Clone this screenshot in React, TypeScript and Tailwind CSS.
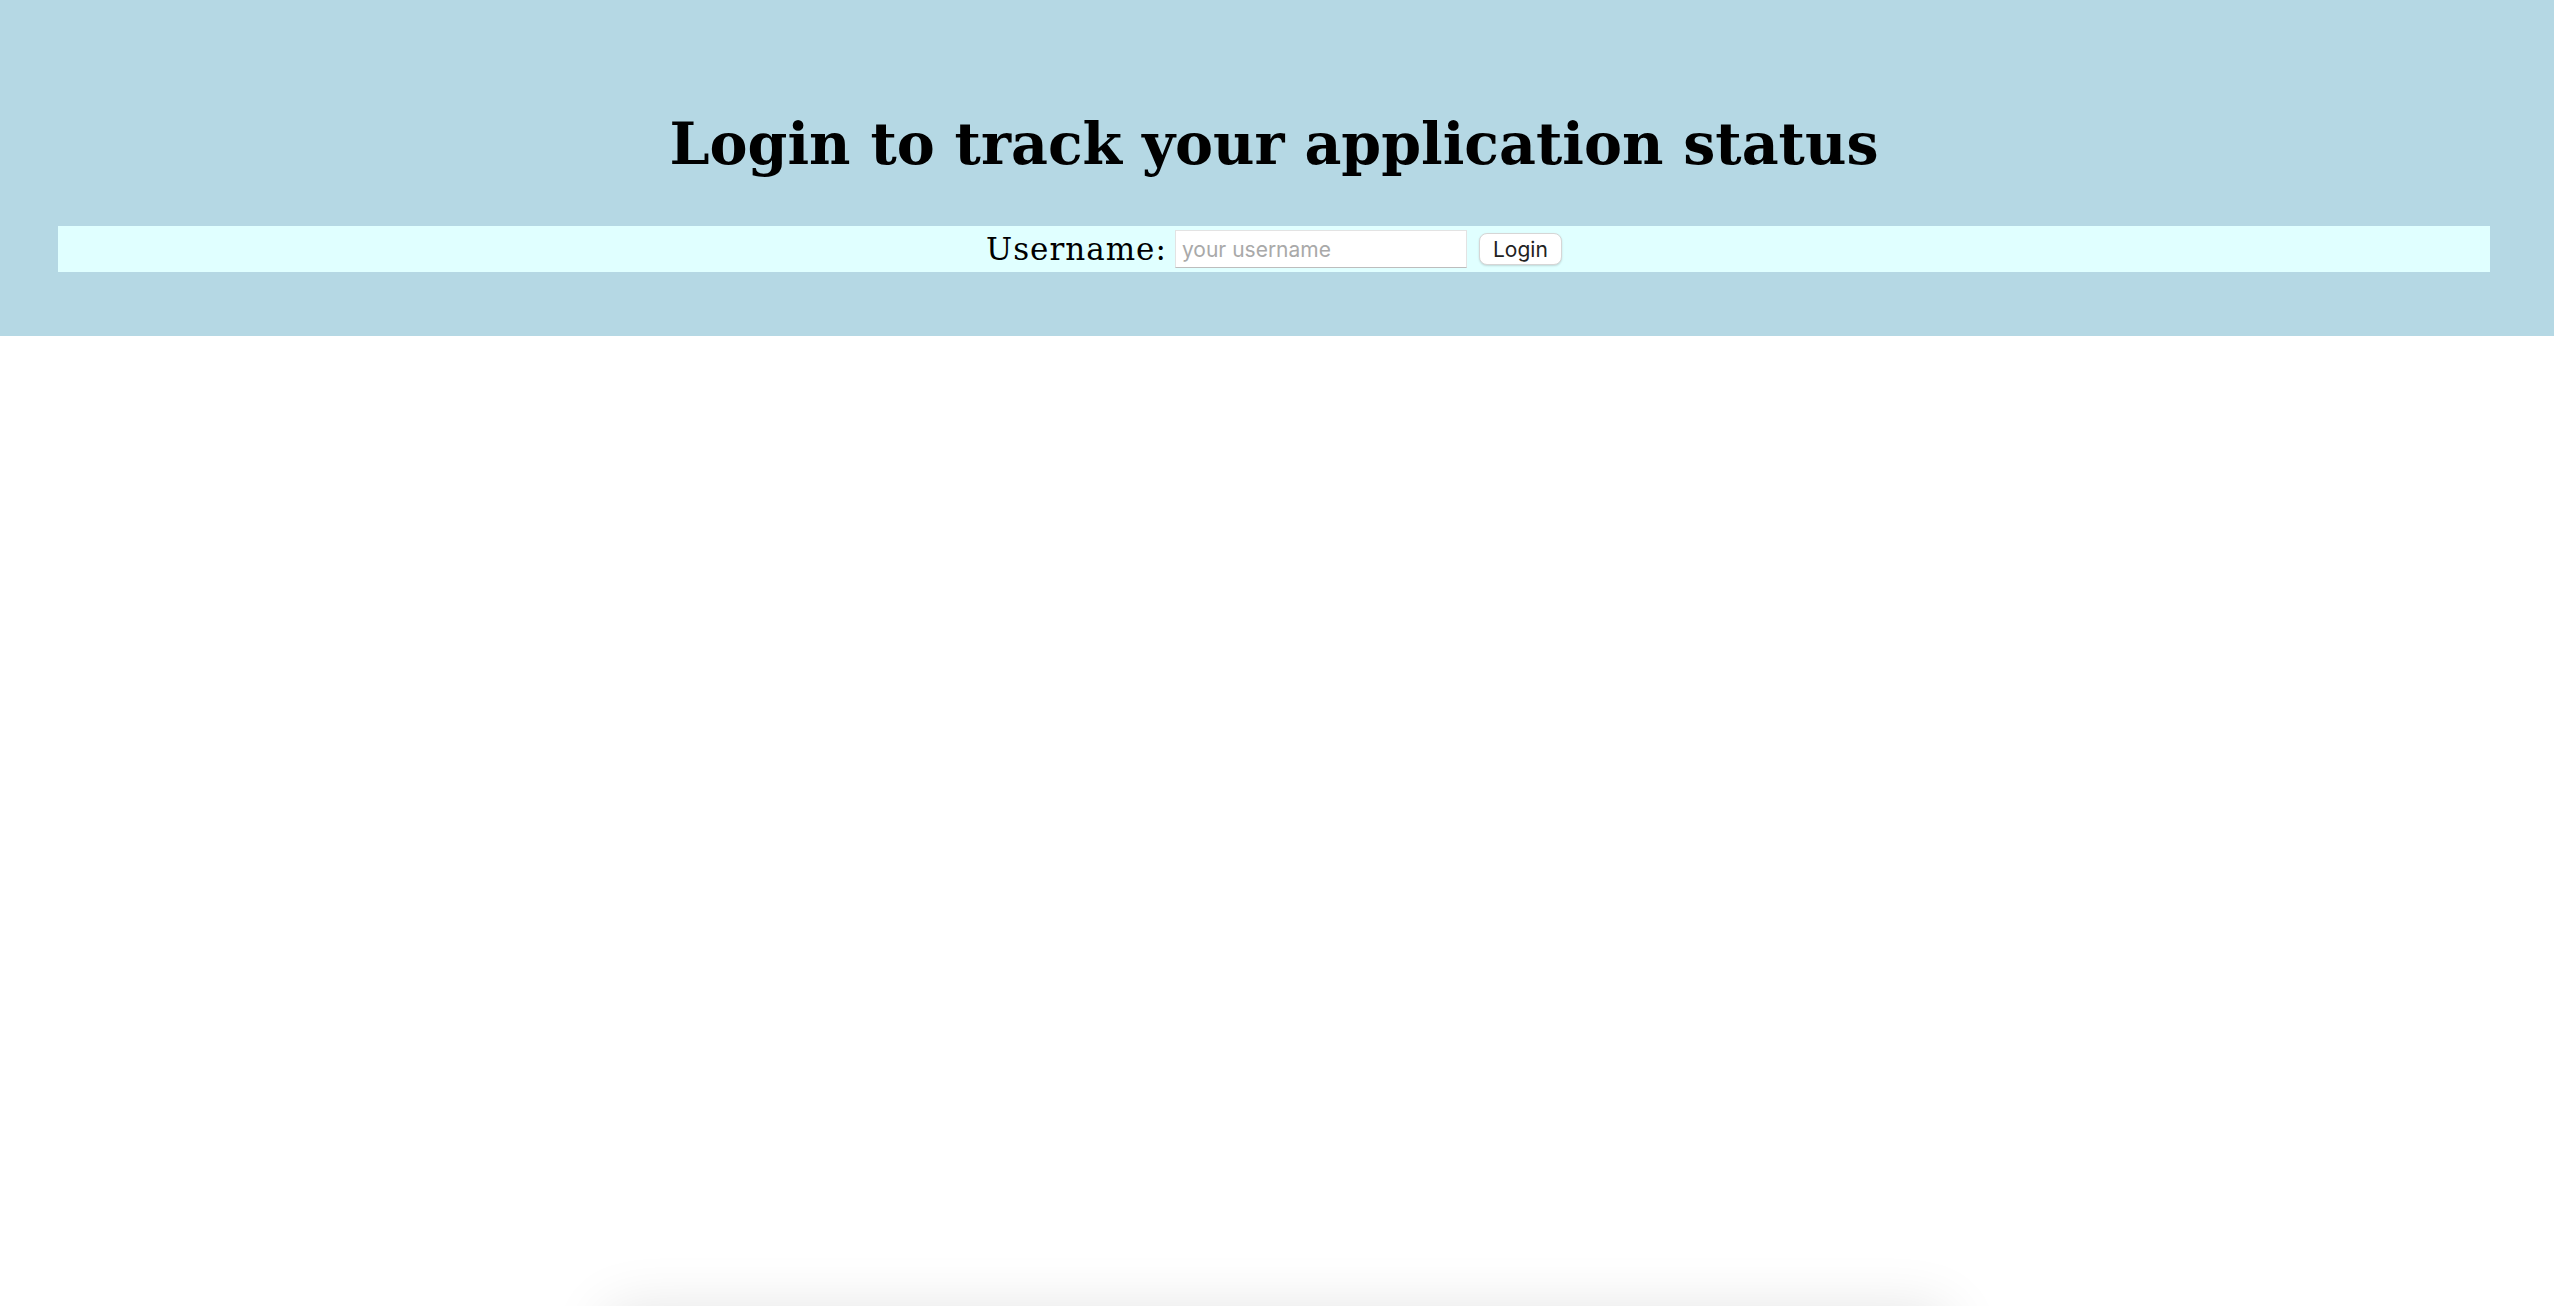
import React from 'react'

export default function App() {
  return (
    <div className="h-screen overflow-hidden bg-white">
      {/* Header */}
      <header className="bg-[#b5d8e4] pl-[58px] pr-[64px] pt-[104px] pb-[64px]">
        <h1
          className="text-center text-black font-bold text-[57px] leading-[80px] mb-[42px]"
          style={{ fontFamily: '"DejaVu Serif", serif' }}
        >
          Login to track your application status
        </h1>
        <form
          className="bg-[#e0ffff] h-[46px] flex items-center justify-center"
          onSubmit={(e) => e.preventDefault()}
        >
          <label
            htmlFor="username"
            className="text-[31px] tracking-[1px] text-black mr-2 leading-none"
            style={{ fontFamily: '"DejaVu Serif", serif' }}
          >
            Username:
          </label>
          <input
            id="username"
            type="text"
            placeholder="your username"
            className="w-[292px] h-[38px] bg-white border border-[#e3e3e3] border-b-[#bdbdbd] px-[6px] text-[21px] text-black placeholder:text-[#a9a9a9] outline-none"
            style={{ fontFamily: 'Inter, "Liberation Sans", sans-serif' }}
          />
          <button
            type="submit"
            className="ml-3 w-[83px] h-[32px] bg-white rounded-lg border border-[#d6d6d6] shadow-[0_1px_2px_rgba(0,0,0,0.15)] text-[21px] text-[#222] leading-none"
            style={{ fontFamily: 'Inter, "Liberation Sans", sans-serif' }}
          >
            Login
          </button>
        </form>
      </header>

      {/* card below the fold, only its shadow shows */}
      <div className="mt-[975px] mx-auto w-[1340px] h-[400px] bg-white rounded-xl shadow-[0_0_60px_rgba(0,0,0,0.12)]" />
    </div>
  )
}
